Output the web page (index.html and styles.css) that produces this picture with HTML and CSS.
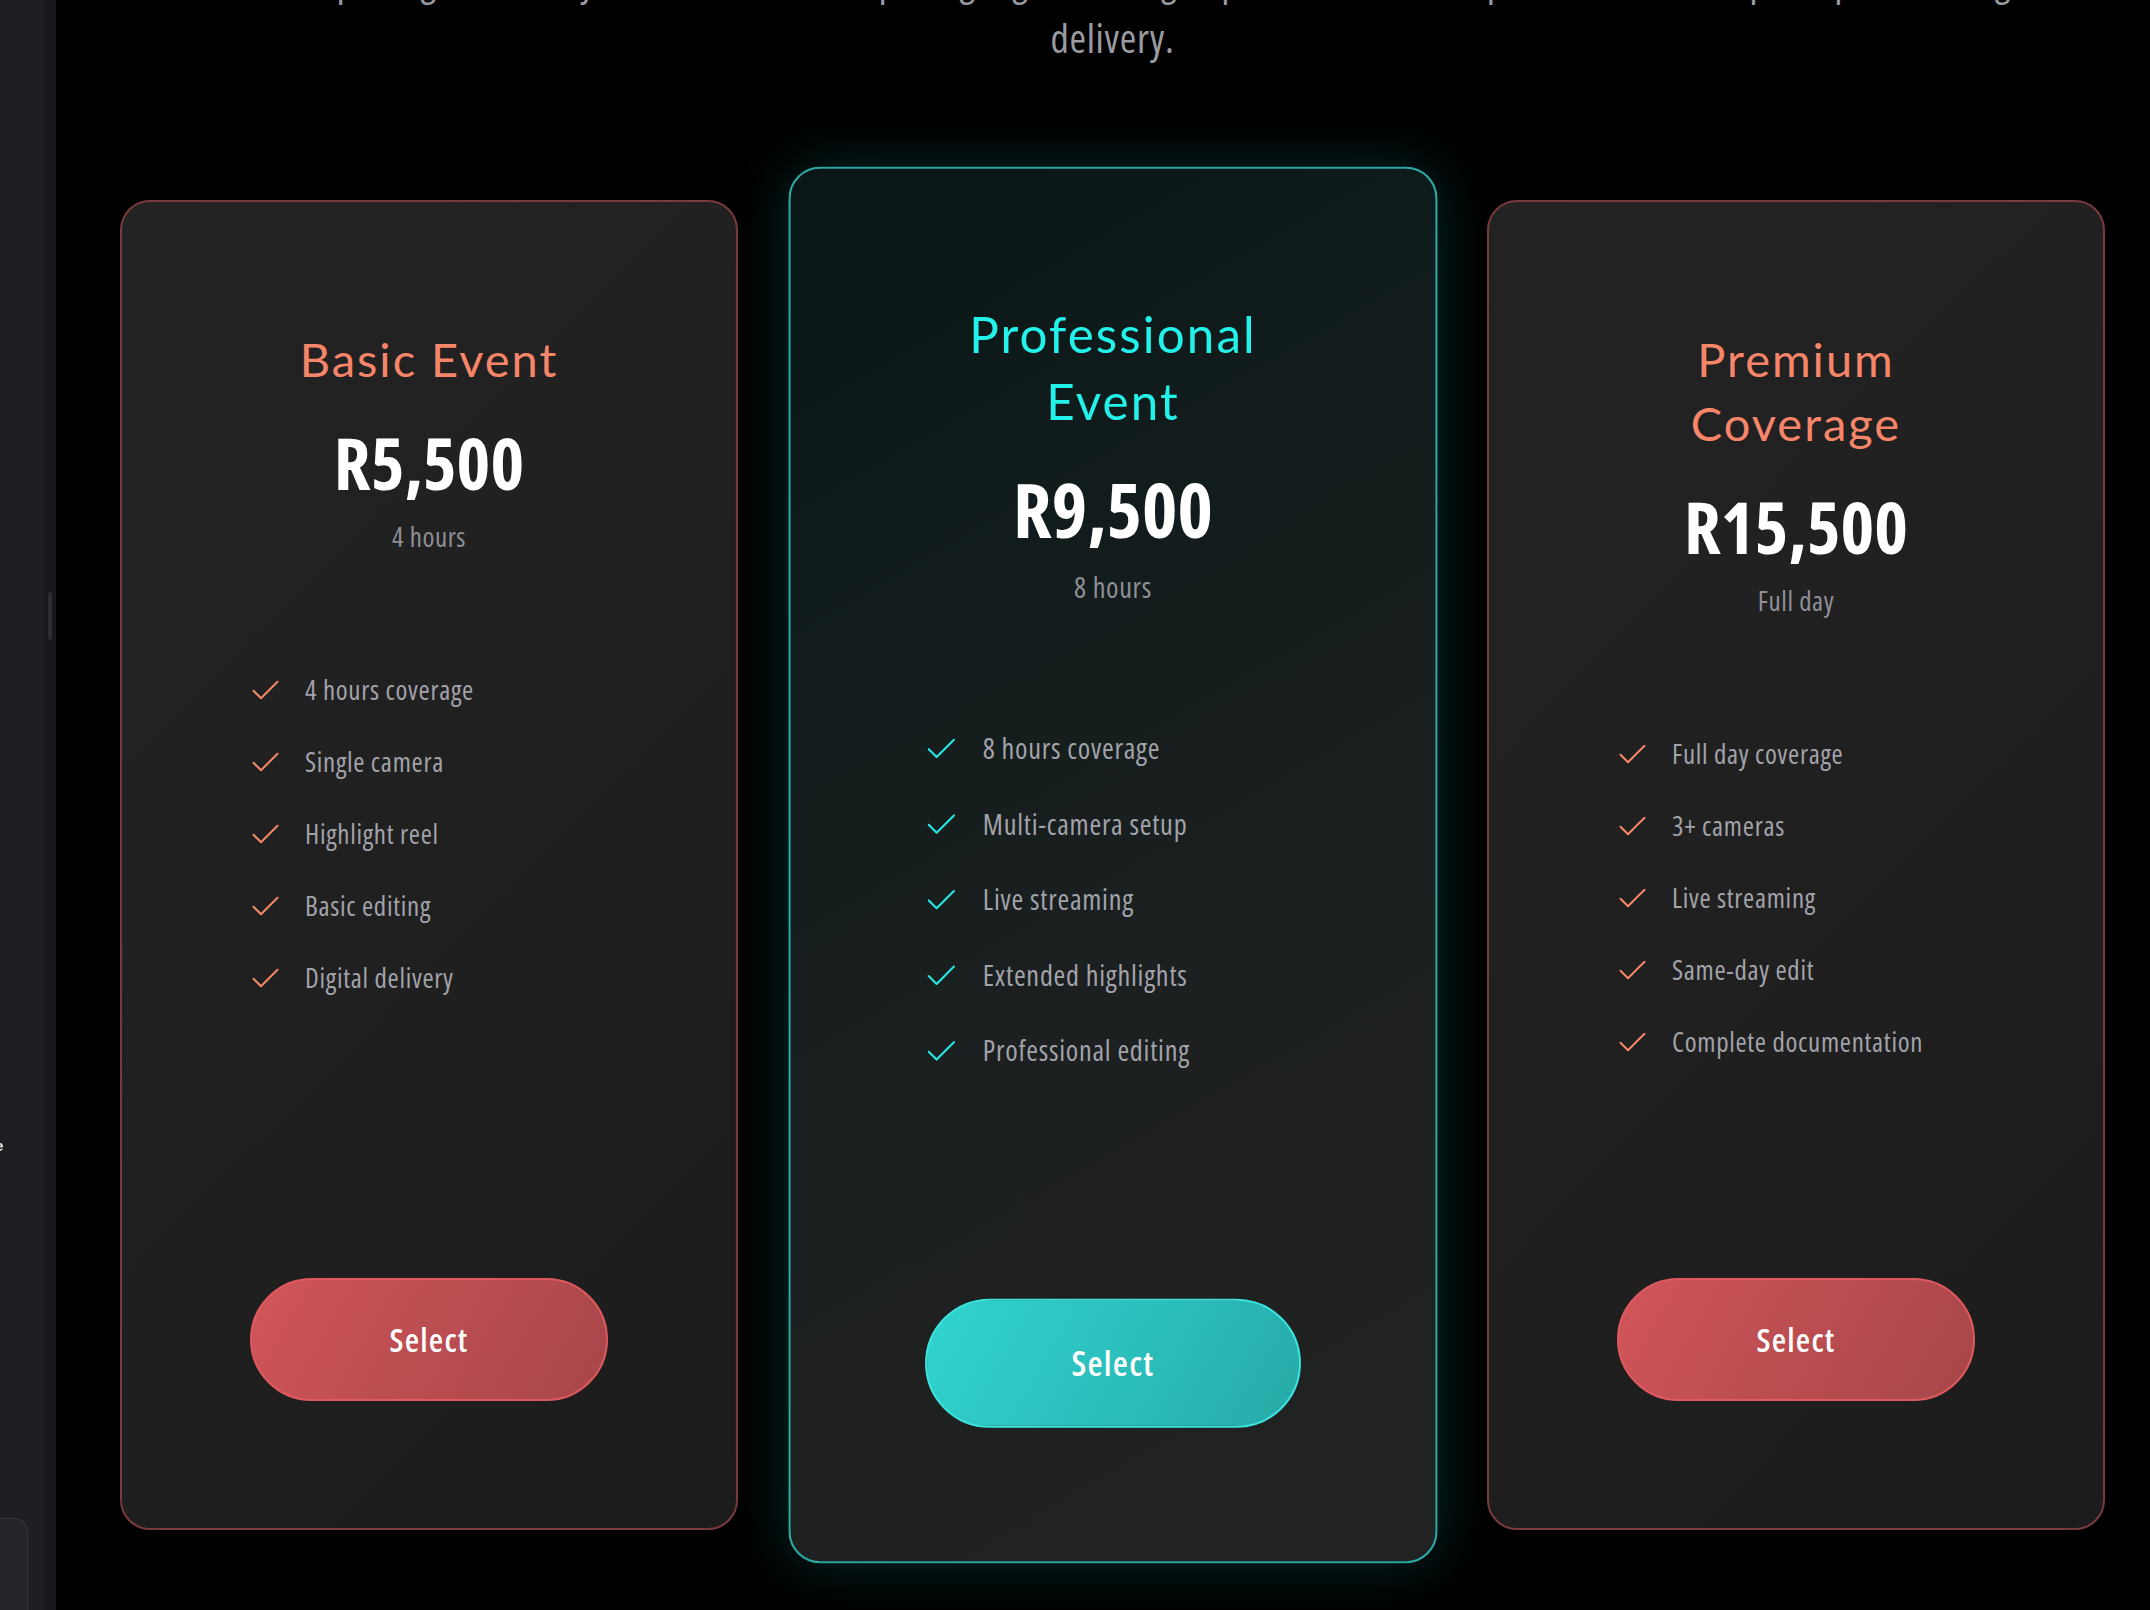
FILE: index.html
```html
<!DOCTYPE html>
<html lang="en">
<head>
<meta charset="utf-8">
<title>Event Packages</title>
<link rel="stylesheet" href="styles.css">
</head>
<body>
<aside class="sidebar">
  <div class="side-panel">
    <div class="side-frag"><span>e</span></div>
    <div class="side-box"></div>
  </div>
  <div class="side-track"><div class="side-thumb"></div></div>
</aside>
<main class="main">
  <p class="intro"><span class="intro-line">Choose the package that fits your event, from simple highlight coverage up to multi-camera productions with quick, polished digital</span><span class="intro-line">delivery.</span></p>
  <section class="plans">
    <article class="card">
      <h3 class="card-title">Basic Event</h3>
      <div class="price">R5,500</div>
      <div class="duration">4 hours</div>
      <ul class="features">
        <li><svg class="check" viewBox="3 5 18 13"><path d="M20 6 9 17l-5-5"/></svg><span>4 hours coverage</span></li>
        <li><svg class="check" viewBox="3 5 18 13"><path d="M20 6 9 17l-5-5"/></svg><span>Single camera</span></li>
        <li><svg class="check" viewBox="3 5 18 13"><path d="M20 6 9 17l-5-5"/></svg><span>Highlight reel</span></li>
        <li><svg class="check" viewBox="3 5 18 13"><path d="M20 6 9 17l-5-5"/></svg><span>Basic editing</span></li>
        <li><svg class="check" viewBox="3 5 18 13"><path d="M20 6 9 17l-5-5"/></svg><span>Digital delivery</span></li>
      </ul>
      <button class="select-btn">Select</button>
    </article>
    <article class="card card-featured">
      <h3 class="card-title">Professional Event</h3>
      <div class="price">R9,500</div>
      <div class="duration">8 hours</div>
      <ul class="features">
        <li><svg class="check" viewBox="3 5 18 13"><path d="M20 6 9 17l-5-5"/></svg><span>8 hours coverage</span></li>
        <li><svg class="check" viewBox="3 5 18 13"><path d="M20 6 9 17l-5-5"/></svg><span>Multi-camera setup</span></li>
        <li><svg class="check" viewBox="3 5 18 13"><path d="M20 6 9 17l-5-5"/></svg><span>Live streaming</span></li>
        <li><svg class="check" viewBox="3 5 18 13"><path d="M20 6 9 17l-5-5"/></svg><span>Extended highlights</span></li>
        <li><svg class="check" viewBox="3 5 18 13"><path d="M20 6 9 17l-5-5"/></svg><span>Professional editing</span></li>
      </ul>
      <button class="select-btn">Select</button>
    </article>
    <article class="card">
      <h3 class="card-title">Premium Coverage</h3>
      <div class="price">R15,500</div>
      <div class="duration">Full day</div>
      <ul class="features">
        <li><svg class="check" viewBox="3 5 18 13"><path d="M20 6 9 17l-5-5"/></svg><span>Full day coverage</span></li>
        <li><svg class="check" viewBox="3 5 18 13"><path d="M20 6 9 17l-5-5"/></svg><span>3+ cameras</span></li>
        <li><svg class="check" viewBox="3 5 18 13"><path d="M20 6 9 17l-5-5"/></svg><span>Live streaming</span></li>
        <li><svg class="check" viewBox="3 5 18 13"><path d="M20 6 9 17l-5-5"/></svg><span>Same-day edit</span></li>
        <li><svg class="check" viewBox="3 5 18 13"><path d="M20 6 9 17l-5-5"/></svg><span>Complete documentation</span></li>
      </ul>
      <button class="select-btn">Select</button>
    </article>
  </section>
</main>
</body>
</html>
```
FILE: styles.css
```css
* { box-sizing: border-box; }

html, body {
  margin: 0;
  padding: 0;
  background: #000;
  height: 1610px;
  overflow: hidden;
}

body {
  display: flex;
  font-family: "Open Sans", "DejaVu Sans Condensed", sans-serif;
  font-stretch: 75%;
}

/* left app sidebar (partially visible) */
.sidebar {
  display: flex;
  flex: 0 0 56px;
  height: 1610px;
}
.side-panel {
  width: 44px;
  background: #1e1f23;
  display: flex;
  flex-direction: column;
  padding-top: 1136px;
}
.side-frag {
  width: 4px;
  overflow: hidden;
  color: #e8e8ea;
  font: 700 15px/20px "Liberation Sans", sans-serif;
}
.side-frag span { display: block; margin-left: -5px; }
.side-box {
  margin-top: auto;
  width: 28px;
  height: 92px;
  background: #23252b;
  border: 1px solid #34363c;
  border-left: none;
  border-bottom: none;
  border-top-right-radius: 14px;
}
.side-track {
  width: 12px;
  background: #17181b;
  padding: 592px 0 0 4px;
}
.side-thumb {
  width: 4px;
  height: 48px;
  border-radius: 2px;
  background: #2b2c31;
}

/* main content */
.main {
  flex: 1;
  padding: 0 45px 0 64px;
}

.intro {
  margin: -49px 0 0;
  text-align: center;
  color: #9a9aa1;
  font-size: 40px;
  letter-spacing: 0.7px;
  line-height: 58px;
  font-weight: 500;
}
.intro-line {
  display: block;
  white-space: nowrap;
}

.plans {
  display: grid;
  grid-template-columns: repeat(3, 618px);
  column-gap: 65.5px;
  margin-top: 133px;
}

.card {
  height: 1330px;
  display: flex;
  flex-direction: column;
  padding: 125px 130px 127px;
  border: 2px solid #7a3a3d;
  border-radius: 30px;
  background: linear-gradient(135deg, #232323 0%, #1f1f1f 60%, #1c1c1c 100%);
}

.card-title {
  margin: 0;
  text-align: center;
  font-family: "Lato", "Noto Sans", sans-serif;
  font-stretch: 100%;
  font-weight: 400;
  font-size: 47px;
  letter-spacing: 2px;
  line-height: 64px;
  color: #f6856a;
}

.price {
  margin-top: 28px;
  text-align: center;
  font-weight: 700;
  font-size: 72px;
  line-height: 86px;
  color: #ffffff;
}

.duration {
  margin-top: 12px;
  text-align: center;
  font-size: 27px;
  letter-spacing: 0.6px;
  line-height: 39px;
  font-weight: 500;
  color: #8f8f97;
}

.features {
  list-style: none;
  margin: 98px 0 0;
  padding: 0;
}
.features li {
  display: flex;
  align-items: center;
  gap: 26px;
  padding: 16px 0;
  font-size: 27px;
  letter-spacing: 0.7px;
  line-height: 40px;
  font-weight: 500;
  color: #a2a2aa;
  white-space: nowrap;
}
.check {
  flex: 0 0 27px;
  width: 27px;
  height: 20px;
  fill: none;
  stroke: #f7866a;
  stroke-width: 1.35;
  stroke-linecap: round;
  stroke-linejoin: round;
}

.select-btn {
  margin-top: auto;
  align-self: center;
  width: 358px;
  height: 123px;
  border-radius: 62px;
  border: 2px solid #df595e;
  background: linear-gradient(120deg, #d15559 0%, #bd4e52 45%, #a6464a 100%);
  color: #ffffff;
  font-family: inherit;
  font-stretch: 75%;
  font-weight: 600;
  font-size: 33px;
  letter-spacing: 1.2px;
  cursor: pointer;
}

/* featured card */
.card-featured {
  transform: scale(1.05);
  border-color: #2aa9a5;
  background: linear-gradient(150deg, #081616 0%, #121c1c 30%, #1d2020 60%, #222222 100%);
  box-shadow: 0 0 55px rgba(26, 190, 185, 0.22);
}
.card-featured .card-title { color: #22f2ea; }
.card-featured .check { stroke: #25e6e0; }
.card-featured .select-btn {
  border-color: #3ce3de;
  background: linear-gradient(120deg, #31d3cf 0%, #2cc0bd 50%, #27a9a7 100%);
}
```
